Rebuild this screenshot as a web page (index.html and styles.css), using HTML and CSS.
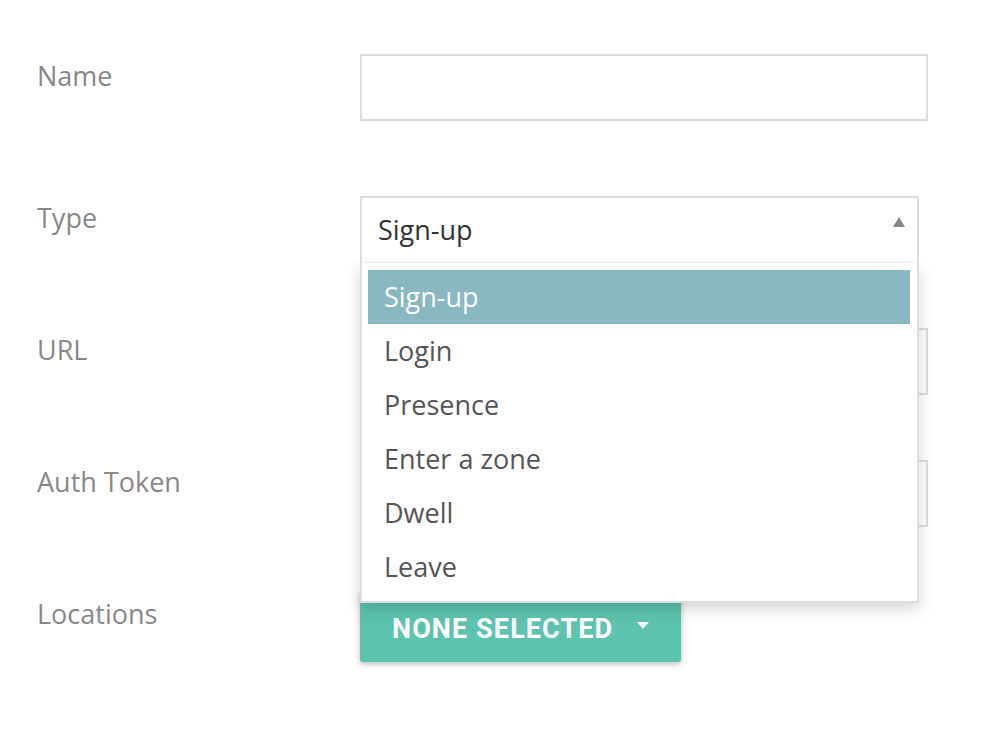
FILE: index.html
```html
<!DOCTYPE html>
<html lang="en">
<head>
<meta charset="utf-8">
<title>Form</title>
<link rel="stylesheet" href="styles.css">
</head>
<body>
<form class="form">
  <div class="row row-first">
    <label class="label">Name</label>
    <div class="input"></div>
  </div>
  <div class="row">
    <label class="label">Type</label>
    <div class="select">
      <div class="select-field">
        <span class="select-value">Sign-up</span>
        <span class="select-arrow"></span>
      </div>
      <ul class="menu">
        <li class="menu-item active">Sign-up</li>
        <li class="menu-item">Login</li>
        <li class="menu-item">Presence</li>
        <li class="menu-item">Enter a zone</li>
        <li class="menu-item">Dwell</li>
        <li class="menu-item">Leave</li>
      </ul>
    </div>
  </div>
  <div class="row">
    <label class="label">URL</label>
    <div class="input"></div>
  </div>
  <div class="row">
    <label class="label">Auth Token</label>
    <div class="input"></div>
  </div>
  <div class="row">
    <label class="label">Locations</label>
    <button type="button" class="btn">
      <span class="btn-text">NONE SELECTED</span>
      <span class="btn-caret"></span>
    </button>
  </div>
</form>
</body>
</html>
```
FILE: styles.css
```css
html, body {
  margin: 0;
  padding: 0;
  background: #ffffff;
}

body {
  font-family: "Open Sans", "Noto Sans", sans-serif;
  font-size: 27px;
}

.form {
  padding: 54px 0 0 37px;
}

.row {
  display: flex;
  align-items: flex-start;
  margin-bottom: 65px;
}

.row-first {
  margin-bottom: 75px;
}

.label {
  width: 323px;
  flex: none;
  color: #888888;
  line-height: 40px;
  padding-top: 2px;
}

.input {
  width: 568px;
  height: 67px;
  box-sizing: border-box;
  border: 2px solid #dddddd;
  background: #ffffff;
}

.select {
  position: relative;
  width: 559px;
  z-index: 2;
}

.select-field {
  height: 67px;
  box-sizing: border-box;
  border: 2px solid #dddddd;
  border-bottom: 1px solid #f3f3f3;
  display: flex;
  align-items: center;
  justify-content: space-between;
  padding: 0 12px 0 16px;
  background: #ffffff;
}

.select-value {
  color: #333333;
  line-height: 40px;
}

.select-arrow {
  align-self: flex-start;
  margin-top: 19px;
  width: 0;
  height: 0;
  border-left: 6px solid transparent;
  border-right: 6px solid transparent;
  border-bottom: 10px solid #888888;
}

.menu {
  position: absolute;
  top: 100%;
  left: 0;
  right: 0;
  margin: 0;
  list-style: none;
  padding: 7px 7px 7px 6px;
  background: #ffffff;
  border: 2px solid #dddddd;
  border-top: 0;
  box-shadow: 0 6px 14px rgba(0, 0, 0, 0.16);
}

.menu-item {
  height: 54px;
  line-height: 54px;
  padding-left: 16px;
  color: #555555;
}

.menu-item.active {
  background: #89b7c2;
  color: #ffffff;
}

.btn {
  display: flex;
  align-items: center;
  gap: 24px;
  height: 70px;
  padding: 0 32px;
  border: 0;
  border-radius: 3px;
  background: #5dc3ae;
  color: #ffffff;
  font-family: Roboto, "Liberation Sans", sans-serif;
  font-weight: 700;
  font-size: 27px;
  letter-spacing: 1.1px;
  box-shadow: 0 2px 5px rgba(0, 0, 0, 0.16), 0 2px 10px rgba(0, 0, 0, 0.12);
}

.btn-text {
  padding-top: 3px;
}

.btn-caret {
  width: 0;
  height: 0;
  border-left: 6.5px solid transparent;
  border-right: 6.5px solid transparent;
  border-top: 7px solid #ffffff;
  margin-top: -4px;
}
```
